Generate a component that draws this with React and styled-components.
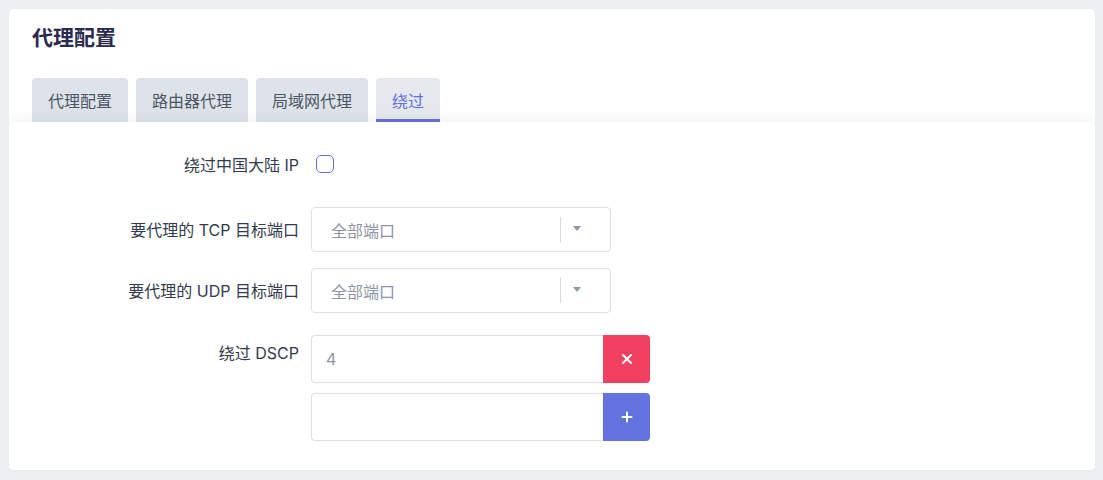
import React from "react";
import styled, { createGlobalStyle } from "styled-components";

const GlobalStyle = createGlobalStyle`
  html, body {
    margin: 0;
    padding: 0;
    background: #eef0f3;
    font-family: "Inter", "Noto Sans CJK SC", sans-serif;
    font-size: 16px;
  }
`;

const Page = styled.div`
  padding: 9px 8px 10px 9px;
`;

const Card = styled.div`
  background: #fff;
  border-radius: 5px;
  overflow: hidden;
  box-shadow: 0 1px 3px rgba(0, 0, 0, 0.04);
`;

const Header = styled.div`
  padding: 15px 23px 0 23px;
`;

const Title = styled.h1`
  margin: 0;
  font-size: 21px;
  line-height: 28px;
  font-weight: 700;
  color: #2b2a50;
`;

const TabBar = styled.div`
  display: flex;
  gap: 8px;
  margin-top: 26px;
`;

const Tab = styled.div`
  height: 44px;
  box-sizing: border-box;
  padding: 3px 16px 0 16px;
  display: flex;
  align-items: center;
  border-radius: 4px 4px 0 0;
  background: ${p => (p.$active ? "#e5e9ee" : "#dee3e9")};
  color: ${p => (p.$active ? "#6370e0" : "#4a5565")};
  border-bottom: 3px solid ${p => (p.$active ? "#6271dd" : "transparent")};
  font-size: 16px;
`;

const Panel = styled.div`
  position: relative;
  background: #fff;
  border-radius: 5px 5px 0 0;
  box-shadow: 0 -6px 12px rgba(30, 40, 60, 0.035);
  padding: 33px 0 29px 0;
  display: grid;
  grid-template-columns: 290px 300px 1fr;
  column-gap: 12px;
  row-gap: 16px;
`;

const Label = styled.div`
  grid-column: 1;
  text-align: right;
  color: #333a4d;
  font-size: 16px;
  line-height: 20px;
  align-self: ${p => (p.$top ? "start" : "center")};
  padding-top: ${p => (p.$top ? "8px" : "0")};
  margin-top: ${p => p.$mt || "0"};
`;

const Control = styled.div`
  grid-column: 2 / 4;
  display: flex;
  flex-direction: column;
  gap: 10px;
  margin-top: ${p => p.$mt || "0"};
`;

const Checkbox = styled.div`
  width: 18px;
  height: 18px;
  box-sizing: border-box;
  border: 1.5px solid #6472de;
  border-radius: 5px;
  margin-left: 5px;
`;

const Select = styled.div`
  width: 300px;
  height: 45px;
  box-sizing: border-box;
  border: 1px solid #dde1e7;
  border-radius: 4px;
  display: flex;
  align-items: center;
  padding-left: 19px;
  color: #8d95a5;
  font-size: 16px;
`;

const SelectValue = styled.span`
  flex: 1;
`;

const Divider = styled.span`
  width: 1px;
  height: 25px;
  background: #d5d9e0;
`;

const Arrow = styled.span`
  width: 49px;
  display: flex;
  justify-content: flex-start;
  padding-left: 12px;
  box-sizing: border-box;
  padding-bottom: 2px;
  &::after {
    content: "";
    border-left: 4px solid transparent;
    border-right: 4px solid transparent;
    border-top: 5px solid #8b99aa;
  }
`;

const InputGroup = styled.div`
  display: flex;
  width: 339px;
  height: 48px;
`;

const Input = styled.div`
  flex: 1;
  box-sizing: border-box;
  border: 1px solid #dde1e7;
  border-right: none;
  border-radius: 4px 0 0 4px;
  display: flex;
  align-items: center;
  padding-left: 14px;
  color: #8d95a5;
  font-size: 16px;
`;

const Btn = styled.div`
  width: 47px;
  border-radius: 0 4px 4px 0;
  background: ${p => (p.$danger ? "#f03f5f" : "#6373e0")};
  display: flex;
  align-items: center;
  justify-content: center;
`;

const CloseIcon = () => (
  <svg width="12" height="12" viewBox="0 0 12 12">
    <path d="M2 2 L10 10 M10 2 L2 10" stroke="#fff" strokeWidth="2" strokeLinecap="round" />
  </svg>
);

const PlusIcon = () => (
  <svg width="12" height="12" viewBox="0 0 12 12">
    <path d="M6 1.5 V10.5 M1.5 6 H10.5" stroke="#fff" strokeWidth="2" strokeLinecap="round" />
  </svg>
);

export default function App() {
  return (
    <Page>
      <GlobalStyle />
      <Card>
        <Header>
          <Title>代理配置</Title>
          <TabBar>
            <Tab>代理配置</Tab>
            <Tab>路由器代理</Tab>
            <Tab>局域网代理</Tab>
            <Tab $active>绕过</Tab>
          </TabBar>
        </Header>
        <Panel>
          <Label>绕过中国大陆 IP</Label>
          <Control>
            <Checkbox />
          </Control>

          <Label $mt="16px">要代理的 TCP 目标端口</Label>
          <Control $mt="16px">
            <Select>
              <SelectValue>全部端口</SelectValue>
              <Divider />
              <Arrow />
            </Select>
          </Control>

          <Label>要代理的 UDP 目标端口</Label>
          <Control>
            <Select>
              <SelectValue>全部端口</SelectValue>
              <Divider />
              <Arrow />
            </Select>
          </Control>

          <Label $top $mt="6px">绕过 DSCP</Label>
          <Control $mt="6px">
            <InputGroup>
              <Input>4</Input>
              <Btn $danger><CloseIcon /></Btn>
            </InputGroup>
            <InputGroup>
              <Input />
              <Btn><PlusIcon /></Btn>
            </InputGroup>
          </Control>
        </Panel>
      </Card>
    </Page>
  );
}
